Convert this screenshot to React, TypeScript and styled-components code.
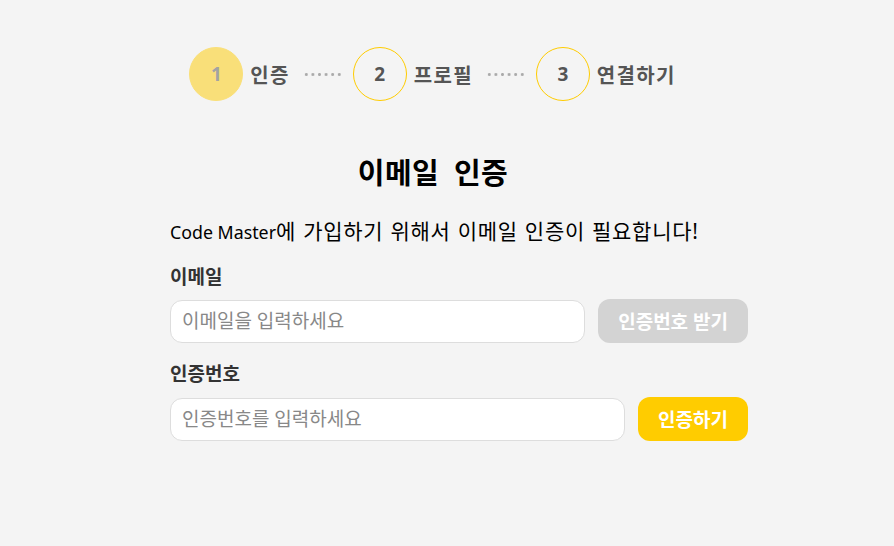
import React from "react";
import styled, { createGlobalStyle } from "styled-components";

const Global = createGlobalStyle`
  html, body { margin: 0; padding: 0; background: #f4f4f4; }
  body { font-family: "Noto Sans", "Noto Sans CJK KR", sans-serif; }
  * { box-sizing: border-box; }
`;

const Page = styled.div`
  min-height: 546px;
  padding: 47px 0 0 170px;
`;

const Container = styled.div`
  width: 526px;
  display: flex;
  flex-direction: column;
`;

const Stepper = styled.div`
  display: flex;
  align-items: center;
  justify-content: center;
  height: 54px;
  padding-right: 1px;
`;

const Step = styled.div`
  display: flex;
  align-items: center;
  gap: 7px;
`;

const Circle = styled.div<{ $active?: boolean }>`
  width: 54px;
  height: 54px;
  border-radius: 50%;
  border: 1px solid #ffcc00;
  background: ${(p) => (p.$active ? "#ffcc00" : "transparent")};
  opacity: ${(p) => (p.$active ? 0.5 : 1)};
  display: flex;
  align-items: center;
  justify-content: center;
  font-size: 19px;
  font-weight: 700;
  color: #555;
`;

const StepLabel = styled.span`
  font-size: 20px;
  font-weight: 700;
  letter-spacing: 1.3px;
  color: #555;
`;

const Dots = styled.span`
  display: block;
  width: 40px;
  height: 3px;
  margin: 1px 10px 0 13px;
  background-image: radial-gradient(circle, #aaa 1.2px, transparent 1.7px);
  background-size: 6.6px 3px;
  background-repeat: repeat-x;
`;

const Title = styled.h1`
  margin: 52px 0 0;
  text-align: center;
  font-size: 29px;
  font-weight: 700;
  letter-spacing: 0.4px;
  word-spacing: 7px;
  color: #000;
  line-height: 40px;
`;

const Desc = styled.p`
  margin: 24px 0 0;
  font-size: 21px;
  letter-spacing: 0.7px;
  word-spacing: 1px;
  color: #000;
  line-height: 28px;
  white-space: nowrap;
`;

const Latin = styled.span`
  font-size: 17.8px;
  letter-spacing: 0;
  word-spacing: 0;
`;

const Label = styled.div<{ $space: number }>`
  margin-top: ${(p) => p.$space}px;
  font-size: 19px;
  font-weight: 700;
  color: #333;
  line-height: 26px;
`;

const Row = styled.div<{ $space: number }>`
  margin-top: ${(p) => p.$space}px;
  width: 578px;
  height: 44px;
  display: flex;
  gap: 13px;
  align-items: center;
`;

const Input = styled.input`
  flex: 1;
  min-width: 0;
  height: 43px;
  border: 1px solid #ddd;
  border-radius: 12px;
  background: #fff;
  padding: 0 11px;
  font-family: inherit;
  font-size: 19px;
  color: #222;
  outline: none;
  &::placeholder { color: #888; }
`;

const Button = styled.button<{ $disabled?: boolean }>`
  height: 44px;
  padding: 0 20px;
  border: none;
  border-radius: 12px;
  background: ${(p) => (p.$disabled ? "#d3d3d3" : "#ffcc00")};
  color: #fff;
  font-family: inherit;
  font-size: 19px;
  font-weight: 700;
  white-space: nowrap;
  cursor: ${(p) => (p.$disabled ? "default" : "pointer")};
`;

export default function App() {
  return (
    <>
      <Global />
      <Page>
        <Container>
          <Stepper>
            <Step>
              <Circle $active>1</Circle>
              <StepLabel>인증</StepLabel>
            </Step>
            <Dots />
            <Step>
              <Circle>2</Circle>
              <StepLabel>프로필</StepLabel>
            </Step>
            <Dots />
            <Step>
              <Circle>3</Circle>
              <StepLabel>연결하기</StepLabel>
            </Step>
          </Stepper>
          <Title>이메일 인증</Title>
          <Desc>
            <Latin>Code Master</Latin>에 가입하기 위해서 이메일 인증이 필요합니다!
          </Desc>
          <Label $space={18}>이메일</Label>
          <Row $space={9}>
            <Input placeholder="이메일을 입력하세요" />
            <Button $disabled>인증번호 받기</Button>
          </Row>
          <Label $space={18}>인증번호</Label>
          <Row $space={10}>
            <Input placeholder="인증번호를 입력하세요" />
            <Button>인증하기</Button>
          </Row>
        </Container>
      </Page>
    </>
  );
}
